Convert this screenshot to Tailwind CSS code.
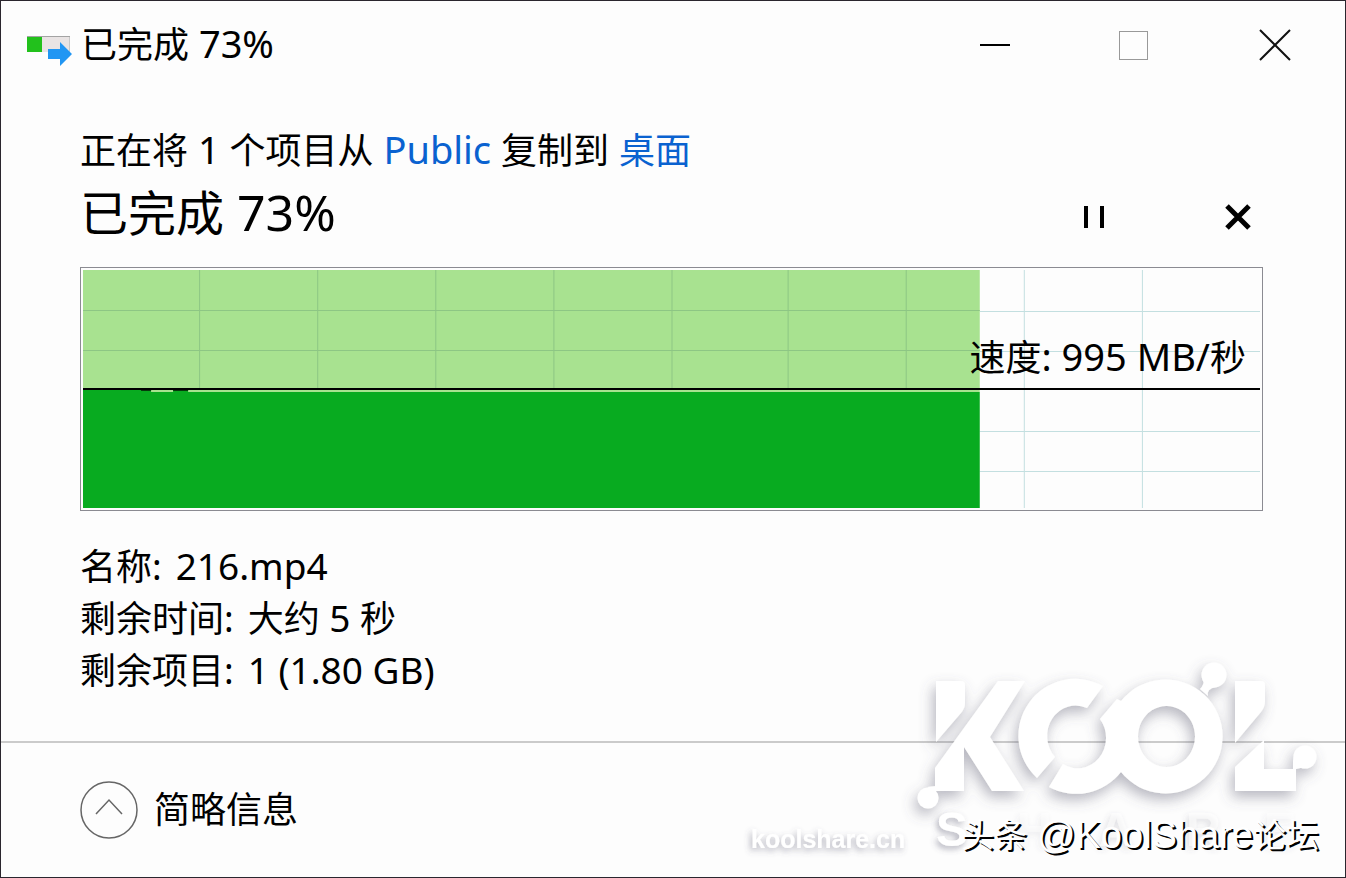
<!DOCTYPE html>
<html lang="zh-CN">
<head>
    <meta charset="UTF-8">
    <meta name="viewport" content="width=device-width, initial-scale=1">
    <title>已完成 73%</title>
    <script src="https://cdn.jsdelivr.net/npm/@tailwindcss/browser@4"></script>
</head>
<body class="bg-[#fdfdfd] text-black font-['Noto_Sans','Noto_Sans_CJK_SC',sans-serif]">
<div class="relative flex flex-col min-h-screen border border-[#2a262e] overflow-hidden">
    <!-- Title bar -->
    <header class="flex items-center justify-between h-[88px] pl-[26px] pr-[54px]">
        <div class="flex items-center gap-2">
            <svg class="w-[46px] h-[46px]" viewBox="0 -13 46 46" aria-hidden="true">
                <rect x="14" y="2" width="28" height="15" fill="#e9e4e4"/>
                <path d="M0 1.5H43" stroke="#a3a3a3"/>
                <path d="M42.500 2V17" stroke="#c8c8c8"/>
                <rect x="0" y="2" width="15" height="15" fill="#22c11c"/>
                <path d="M21 14H33V7L45 19L33 31V24H21Z" fill="#2196f3"/>
            </svg>
            <h1 class="text-4xl leading-[52px]">已完成<span class="text-[38px] leading-none"> 73%</span></h1>
        </div>
        <div class="flex items-center gap-[108px]">
            <button type="button" aria-label="最小化">
                <svg class="w-8 h-8" viewBox="0 0 32 32"><path d="M1 16H31" stroke="#000" stroke-width="2"/></svg>
            </button>
            <button type="button" aria-label="最大化">
                <svg class="w-8 h-8" viewBox="0 0 32 32"><rect x=".5" y="2.500" width="28" height="28" fill="none" stroke="#999"/></svg>
            </button>
            <button type="button" aria-label="关闭">
                <svg class="w-8 h-8" viewBox="0 0 32 32"><path d="M1 1L31 31M31 1L1 31" stroke="#111" stroke-width="2"/></svg>
            </button>
        </div>
    </header>

    <!-- Copy progress -->
    <main class="flex-1 pl-[79px] pr-[82px] pt-9">
        <p class="text-4xl leading-[52px]">正在将<span class="text-[38px] leading-none"> 1 </span>个项目从<span class="text-[38px] leading-none"> <a href="#" class="text-[#0a62d0]">Public</a> </span>复制到<span class="text-[38px] leading-none"> </span><a href="#" class="text-[#0a62d0]">桌面</a></p>
        <div class="flex items-center justify-between">
            <h2 class="text-5xl leading-[72px]">已完成<span class="text-[50px] leading-none"> 73%</span></h2>
            <div class="flex items-center gap-[112px] pt-2 pr-2">
                <button type="button" aria-label="暂停">
                    <svg class="w-8 h-8" viewBox="0 0 32 32"><path d="M7 5V27M23 5V27" stroke="#000" stroke-width="4"/></svg>
                </button>
                <button type="button" aria-label="取消">
                    <svg class="w-8 h-8" viewBox="0 0 32 32"><path d="M4 5L26 27M26 5L4 27" stroke="#000" stroke-width="5"/></svg>
                </button>
            </div>
        </div>

        <div class="relative mt-[18px] border border-[#8b8b92] bg-[#fdfdfd]">
            <svg class="block w-full h-[242px]" viewBox="0 0 1180 242" preserveAspectRatio="none" aria-hidden="true">
                <path d="M898 43.500H1178M898 83.500H1178M898 163.500H1178M898 203.500H1178M942.500 2V240M1060.500 2V240" stroke="#c3dfe0"/>
                <rect x="2" y="2" width="896" height="122" fill="#a8e290"/>
                <path d="M2 42.500H898M2 82.500H898M118.500 2V120M236.500 2V120M354.500 2V120M472.500 2V120M590.500 2V120M706.500 2V120M824.500 2V120" stroke="#8dc684"/>
                <path d="M2 122H70V124H92V122H107V124H898V240H2Z" fill="#08ab20"/>
                <path d="M2 121H1178" stroke="#000" stroke-width="2"/>
                <path d="M60 122.500H70M92 122.500H107" stroke="#06380c"/>
            </svg>
            <p class="absolute right-4 top-[64px] text-4xl leading-[52px]">速度<span class="text-[38px] leading-none">: 995 MB/</span>秒</p>
        </div>

        <dl class="mt-[30px] text-4xl leading-[52px]">
            <div class="flex gap-[14px]"><dt>名称:</dt><dd><span class="text-[37px] leading-none">216.mp4</span></dd></div>
            <div class="flex gap-[14px]"><dt>剩余时间:</dt><dd>大约<span class="text-[37px] leading-none"> 5 </span>秒</dd></div>
            <div class="flex gap-[14px]"><dt>剩余项目:</dt><dd><span class="text-[37px] leading-none">1 (1.80 GB)</span></dd></div>
        </dl>
    </main>

    <footer class="flex items-center h-[136px] pl-[79px] border-t-2 border-[#cbcbcb]">
        <button type="button" class="flex items-center gap-4 text-4xl leading-[52px]">
            <svg class="w-[58px] h-[58px]" viewBox="0 0 58 58" aria-hidden="true">
                <circle cx="29" cy="29" r="28" fill="none" stroke="#666" stroke-width="1.500"/>
                <path d="M16 33L29 19L42 33" fill="none" stroke="#666" stroke-width="1.500"/>
            </svg>
            简略信息
        </button>
    </footer>

    <!-- Watermark -->
    <div class="absolute right-0 bottom-0 w-[616px] h-[238px] pointer-events-none">
        <svg class="w-full h-full" viewBox="0 0 616 238" aria-hidden="true">
            <defs>
                <filter id="soft" x="-20%" y="-20%" width="140%" height="150%">
                    <feDropShadow dx="-3" dy="6" stdDeviation="7" flood-color="#55556a" flood-opacity=".42"/>
                </filter>
                <filter id="faint" x="-20%" y="-20%" width="140%" height="160%">
                    <feDropShadow dx="-2" dy="3" stdDeviation="3" flood-color="#55556a" flood-opacity=".45"/>
                </filter>
            </defs>
            <g fill="#fff" filter="url(#soft)">
                <!-- K -->
                <path d="M207 42H232Q236 42 236 46V64Q236 69 232 74L207 103Z"/>
                <path d="M269 42H296L261 98L295 152H263L235 108V152H206V129Z"/>
                <circle cx="199" cy="159" r="10.500"/>
                <path d="M199 148L207 147V157L206 165Z"/>
                <!-- linked rings -->
                <path d="M308 139A57 57 0 0 1 374 47L358 69A28.500 30.500 0 0 0 326 118Z"/>
                <path d="M320 148L334 125A28.500 30.500 0 0 0 371 80L388 60L392 62A57 57 0 1 1 392 133A57 57 0 0 1 320 148ZM437 67A28.500 30.500 0 1 0 438 67Z" fill-rule="evenodd"/>
                <circle cx="485" cy="36" r="12.500"/>
                <path d="M474 40Q476 45 471 50L479 57Q477 50 487 48Z"/>
                <!-- L -->
                <path d="M506 42H532Q536 42 536 46V62Q536 68 532 73L506 104Z"/>
                <path d="M535 101V130H564V122Q566 108 576 108V128L567 130V152H506V128Z"/>
                <circle cx="576" cy="118" r="11.500"/>
            </g>
            <g fill="#fff" filter="url(#faint)" font-family="'Liberation Sans', sans-serif" font-weight="700" font-size="48">
                <text x="207" y="207">S</text>
                <text x="288" y="207" opacity=".2">H</text>
                <text x="370" y="207" opacity=".4">A</text>
                <text x="457" y="207" opacity=".4">R</text>
                <text x="535" y="207" opacity=".2">E</text>
                <text x="22" y="209" font-size="25">koolshare.cn</text>
            </g>
        </svg>
        <p class="absolute right-[26px] bottom-4 flex items-center text-[33px] leading-[52px] text-white whitespace-nowrap [text-shadow:2px_2px_0_#000]">
            <span>头条</span><span class="ml-[10px] font-['Liberation_Sans',sans-serif] text-[38px]">@KoolShare</span><span>论坛</span>
        </p>
    </div>
</div>
</body>
</html>
